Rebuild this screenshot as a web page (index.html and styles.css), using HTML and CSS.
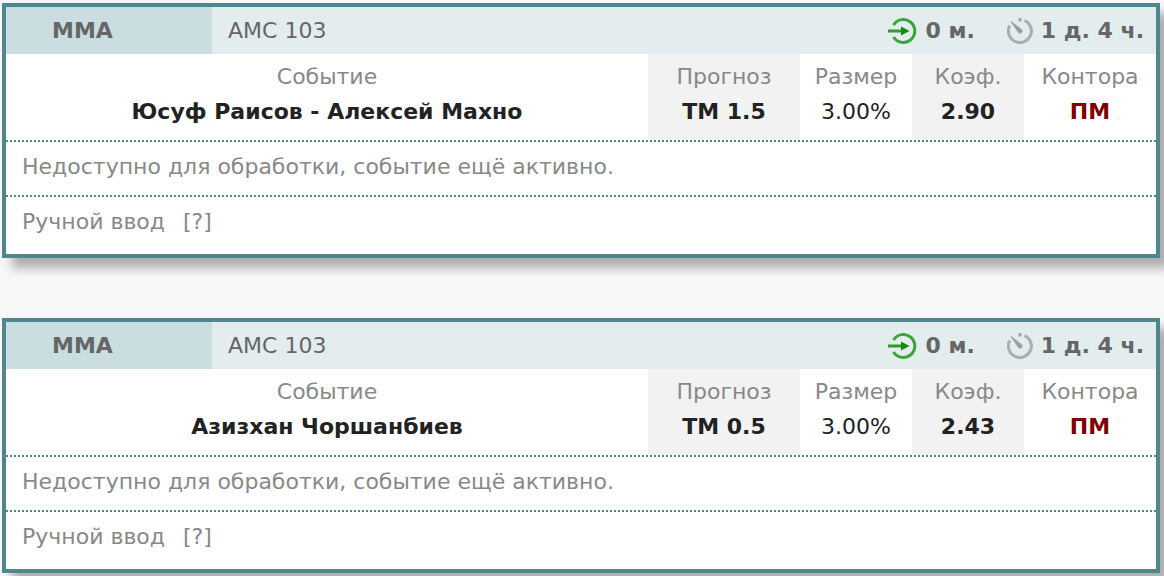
FILE: index.html
```html
<!DOCTYPE html>
<html lang="ru">
<head>
    <meta charset="UTF-8">
    <meta name="viewport" content="width=device-width, initial-scale=1.0">
    <title>Прогнозы</title>
    <link rel="stylesheet" href="styles.css">
</head>
<body>

<!-- иконки -->
<svg class="sprite" aria-hidden="true">
    <symbol id="icon-enter" viewBox="0 0 30 26">
        <path d="M5.500 7A11.500 11.500 0 1 1 5.500 19" fill="none" stroke="#3ba53b" stroke-width="3"/>
        <path d="M0 13H16" stroke="#2c9d2c" stroke-width="3"/>
        <path d="M13 8.500L21.500 13L13 17.500Z" fill="#128a12"/>
    </symbol>
    <symbol id="icon-timer" viewBox="0 0 26 26">
        <path d="M17.500 2.500A11.500 11.500 0 1 1 2.800 7.500" fill="none" stroke="#aaaeae" stroke-width="3"/>
        <path d="M13 0V3.500" stroke="#a0a4a4" stroke-width="3"/>
        <path d="M4 3.500L14.500 11.500A2 2 0 0 1 11.500 14.500Z" fill="#9a9e9e" stroke="#a0a4a4"/>
    </symbol>
</svg>

<div class="bet">
    <div class="bet-header">
        <div class="sport">ММА</div>
        <div class="league">AMC 103</div>
        <div class="time"><svg class="icon-enter"><use href="#icon-enter"/></svg>0 м.</div>
        <div class="time"><svg class="icon-timer"><use href="#icon-timer"/></svg>1 д. 4 ч.</div>
    </div>
    <table class="bet-table">
        <thead>
            <tr>
                <th>Событие</th>
                <th class="pick shaded">Прогноз</th>
                <th class="stake">Размер</th>
                <th class="odds shaded">Коэф.</th>
                <th class="office">Контора</th>
            </tr>
        </thead>
        <tbody>
            <tr>
                <td>Юсуф Раисов - Алексей Махно</td>
                <td class="shaded">ТМ 1.5</td>
                <td class="stake">3.00%</td>
                <td class="shaded">2.90</td>
                <td class="office">ПМ</td>
            </tr>
        </tbody>
    </table>
    <div class="bet-row">Недоступно для обработки, событие ещё активно.</div>
    <div class="bet-row bet-footer">Ручной ввод <button type="button" class="help">[?]</button></div>
</div>

<div class="bet">
    <div class="bet-header">
        <div class="sport">ММА</div>
        <div class="league">AMC 103</div>
        <div class="time"><svg class="icon-enter"><use href="#icon-enter"/></svg>0 м.</div>
        <div class="time"><svg class="icon-timer"><use href="#icon-timer"/></svg>1 д. 4 ч.</div>
    </div>
    <table class="bet-table">
        <thead>
            <tr>
                <th>Событие</th>
                <th class="pick shaded">Прогноз</th>
                <th class="stake">Размер</th>
                <th class="odds shaded">Коэф.</th>
                <th class="office">Контора</th>
            </tr>
        </thead>
        <tbody>
            <tr>
                <td>Азизхан Чоршанбиев</td>
                <td class="shaded">ТМ 0.5</td>
                <td class="stake">3.00%</td>
                <td class="shaded">2.43</td>
                <td class="office">ПМ</td>
            </tr>
        </tbody>
    </table>
    <div class="bet-row">Недоступно для обработки, событие ещё активно.</div>
    <div class="bet-row bet-footer">Ручной ввод <button type="button" class="help">[?]</button></div>
</div>

</body>
</html>
```
FILE: styles.css
```css
* {
    box-sizing: border-box;
}
body {
    margin: 0;
    padding: 3px 4px 3px 2px;
    background-color: #f7f7f7;
    color: #888;
    font-family: Verdana, "DejaVu Sans", sans-serif;
    font-size: 22px;
    line-height: 27px;
    overflow-x: hidden;
}
.sprite {
    display: none;
}
.bet {
    border: 4px solid #50868d;
    background-color: white;
    box-shadow: 10px 10px 10px rgba(0, 0, 0, 0.3);
}
.bet + .bet {
    margin-top: 60px;
}
.bet-header {
    display: flex;
    align-items: center;
    padding-right: 12px;
    background-color: #e3eded;
    color: #666;
}
.sport {
    width: 206px;
    padding: 10px 46px;
    background-color: #cadde0;
    font-weight: bold;
}
.league {
    flex: 1;
    padding-left: 16px;
}
.time {
    display: flex;
    align-items: center;
    gap: 8px;
    margin-left: 32px;
    font-weight: bold;
}
.icon-enter {
    width: 30px;
    height: 26px;
}
.icon-timer {
    width: 26px;
    height: 26px;
}
.bet-table {
    width: 100%;
    table-layout: fixed;
    border-collapse: collapse;
    text-align: center;
}
th {
    padding: 9px 0 4px;
    font-weight: normal;
}
td {
    padding: 4px 0 15px;
    color: #222;
    font-weight: bold;
}
.shaded {
    background-color: #f2f2f2;
}
.pick {
    width: 152px;
}
.stake {
    width: 112px;
    font-weight: normal;
}
.odds {
    width: 112px;
}
.office {
    width: 132px;
}
td.office {
    color: #800000;
}
.bet-row {
    padding: 11px 16px 15px;
    border-top: 2px dotted #50868d;
}
.bet-footer {
    padding-bottom: 19px;
}
.help {
    margin-left: 11px;
    padding: 0;
    border: none;
    background: none;
    color: inherit;
    font: inherit;
    cursor: pointer;
}
```
